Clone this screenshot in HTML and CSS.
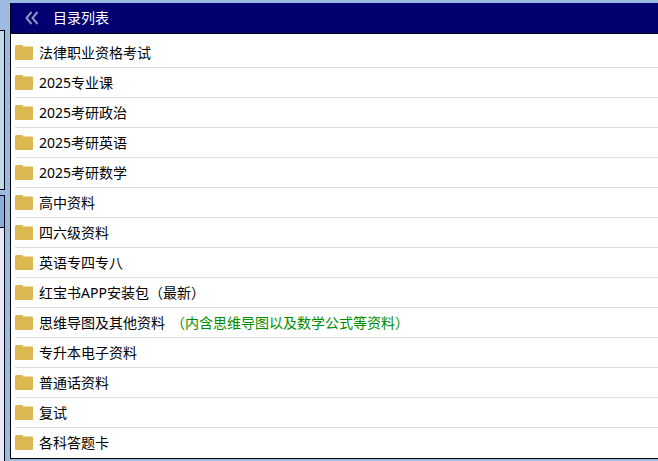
FILE: index.html
```
<!DOCTYPE html>
<html lang="zh-CN">
<head>
    <meta charset="UTF-8">
    <meta name="viewport" content="width=device-width, initial-scale=1.0">
    <title>目录列表</title>
    <link rel="stylesheet" href="styles.css">
</head>
<body>
    <svg class="sprite" aria-hidden="true">
        <symbol id="folder" viewBox="0 0 18 18">
            <path d="M1.500 1H7Q8 1 8 2V2.500H17Q18 2.500 18 3.500V15Q18 16 17 16H1Q0 16 0 15V2.500Q0 1 1.500 1Z" fill="#dcb850"/>
        </symbol>
    </svg>
    <div class="page">
        <aside class="sidebar">
            <div class="side-box side-info"></div>
            <div class="side-box side-menu">
                <div class="side-title"></div>
            </div>
        </aside>
        <main class="panel">
            <header class="panel-header">
                <button type="button" class="back" aria-label="返回">
                    <svg width="14" height="14" viewBox="0 0 14 14">
                        <path d="M6.500 1L1.500 7l5 6M12.500 1L7.500 7l5 6" fill="none" stroke="#9092c4" stroke-width="2"/>
                    </svg>
                </button>
                <h1>目录列表</h1>
            </header>
            <ul class="list">
                <li><svg class="icon"><use href="#folder"/></svg><a href="#">法律职业资格考试</a></li>
                <li><svg class="icon"><use href="#folder"/></svg><a href="#">2025专业课</a></li>
                <li><svg class="icon"><use href="#folder"/></svg><a href="#">2025考研政治</a></li>
                <li><svg class="icon"><use href="#folder"/></svg><a href="#">2025考研英语</a></li>
                <li><svg class="icon"><use href="#folder"/></svg><a href="#">2025考研数学</a></li>
                <li><svg class="icon"><use href="#folder"/></svg><a href="#">高中资料</a></li>
                <li><svg class="icon"><use href="#folder"/></svg><a href="#">四六级资料</a></li>
                <li><svg class="icon"><use href="#folder"/></svg><a href="#">英语专四专八</a></li>
                <li><svg class="icon"><use href="#folder"/></svg><a href="#">红宝书APP安装包（最新）</a></li>
                <li><svg class="icon"><use href="#folder"/></svg><a href="#">思维导图及其他资料</a><span class="note">（内含思维导图以及数学公式等资料）</span></li>
                <li><svg class="icon"><use href="#folder"/></svg><a href="#">专升本电子资料</a></li>
                <li><svg class="icon"><use href="#folder"/></svg><a href="#">普通话资料</a></li>
                <li><svg class="icon"><use href="#folder"/></svg><a href="#">复试</a></li>
                <li><svg class="icon"><use href="#folder"/></svg><a href="#">各科答题卡</a></li>
            </ul>
        </main>
    </div>
</body>
</html>
```
FILE: styles.css
```
* {
    box-sizing: border-box;
}
body {
    margin: 0;
    background-color: #9dbae2;
    color: #000;
    font-family: "Noto Sans", "Noto Sans CJK SC", sans-serif;
    font-size: 14px;
    line-height: 20px;
}
.sprite {
    display: none;
}
.page {
    display: flex;
    gap: 5px;
    min-height: 100vh;
}
.sidebar {
    display: flex;
    flex-direction: column;
    gap: 5px;
    width: 5px;
    padding-top: 30px;
}
.side-box {
    border: 1px solid #000;
    border-left: none;
}
.side-info {
    height: 160px;
    background-color: #bedcec;
}
.side-menu {
    flex: 1;
    border-bottom: none;
    background-color: #e6e8fc;
}
.side-title {
    height: 32px;
    border-bottom: 1px solid #000;
    background-color: #8cacdc;
}
.panel {
    flex: 1;
    align-self: flex-start;
    margin-top: 3px;
    border-left: 1px solid #000;
    border-bottom: 1px solid #000;
    background-color: #fff;
}
.panel-header {
    display: flex;
    align-items: center;
    gap: 14px;
    height: 31px;
    padding-left: 14px;
    border-bottom: 1px solid #000;
    background-color: #000070;
    color: #fff;
}
.panel-header h1 {
    margin: 0;
    font-size: 14px;
    font-weight: normal;
}
.back {
    display: flex;
    padding: 0;
    border: none;
    background: none;
    cursor: pointer;
}
.list {
    margin: 0;
    padding: 4px 0 0 4px;
    list-style: none;
}
.list li {
    display: flex;
    align-items: center;
    height: 30px;
    border-bottom: 1px solid #dedede;
}
.list li:last-child {
    border-bottom-color: transparent;
}
.icon {
    width: 18px;
    height: 18px;
    margin-right: 6px;
}
.list a {
    color: #000;
    text-decoration: none;
}
.list a:hover {
    text-decoration: underline;
}
.note {
    margin-left: 6px;
    color: #008c00;
}
```
